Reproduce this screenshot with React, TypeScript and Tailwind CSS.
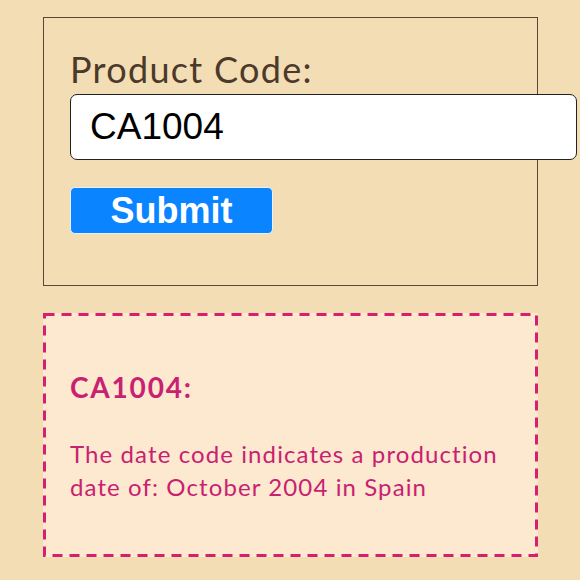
export default function App() {
  return (
    <div className="min-h-[580px] w-[580px] bg-[#f3ddb4] pl-[43px] pt-[17px] overflow-hidden">
      {/* Form box */}
      <div className="w-[495px] h-[269px] border-[1.5px] border-[#5a4633] pl-[26px] pt-[31px]">
        <label className="block text-[36px] leading-[40px] tracking-[1.3px] text-[#4b3a2a] font-['Lato',sans-serif]">
          Product Code:
        </label>
        <div className="mt-[5px] w-[507px] h-[66px] bg-white border-[1.5px] border-[#222] rounded-[7px] flex items-center pl-[19px]">
          <span className="text-[37px] text-black font-['Liberation_Sans',Arial,sans-serif]">CA1004</span>
        </div>
        <button className="mt-[27px] w-[203px] h-[47px] bg-[#0a84ff] border border-[#e8f1fb] rounded-[5px] flex items-center justify-center">
          <span className="text-[36px] leading-none font-bold text-white font-['Liberation_Sans',Arial,sans-serif]">Submit</span>
        </button>
      </div>

      {/* Result box */}
      <div className="relative mt-[27px] w-[495px] h-[244px] bg-[#fde9cf] pl-[27px] pt-[57px] font-['Lato',sans-serif] text-[#c92172]">
        <svg className="absolute inset-0 pointer-events-none" width="495" height="244" aria-hidden="true">
          <rect x="1.5" y="1.5" width="492" height="241" fill="none" stroke="#d4206f" strokeWidth="3" strokeDasharray="10 7" />
        </svg>
        <div className="text-[28px] font-bold leading-[34px] tracking-[1.8px]">CA1004:</div>
        <p className="mt-[33px] text-[24px] leading-[33px] tracking-[1.1px] pr-[10px]">
          The date code indicates a production date of: October 2004 in Spain
        </p>
      </div>
    </div>
  );
}
